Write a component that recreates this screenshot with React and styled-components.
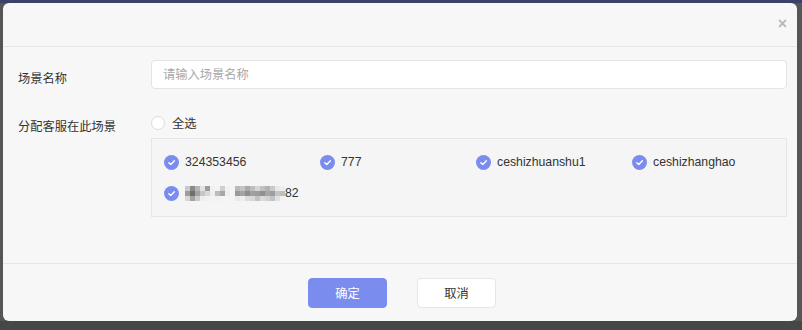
import React from 'react';
import styled, { createGlobalStyle } from 'styled-components';

const GlobalStyle = createGlobalStyle`
  body {
    margin: 0;
    background: #565656;
    font-family: "Liberation Sans", "Noto Sans CJK SC", sans-serif;
  }
`;

const agents = ['324353456', '777', 'ceshizhuanshu1', 'ceshizhanghao'];

// pixelated (masked) name, drawn as a mosaic
const mosaic = [
  ['#c9c9c9', '#8a8a8a', '#b5b5b5', '#e2e2e2', '#9c9c9c', '#f0f0f0', '#f3f3f3', '#cfcfcf', '#f2f2f2', '#f4f4f4', '#b9b9b9', '#c4c4c4', '#a9a9a9', '#bdbdbd', '#d6d6d6', '#c0c0c0', '#b2b2b2', '#cacaca', '#e9e9e9', '#eeeeee'],
  ['#9d9d9d', '#6f6f6f', '#a2a2a2', '#c6c6c6', '#d8d8d8', '#eeeeee', '#bcbcbc', '#a7a7a7', '#efefef', '#f4f4f4', '#9a9a9a', '#a4a4a4', '#8e8e8e', '#a0a0a0', '#9b9b9b', '#8f8f8f', '#a6a6a6', '#9e9e9e', '#c5c5c5', '#bebebe'],
  ['#d7d7d7', '#a3a3a3', '#cbcbcb', '#efefef', '#f2f2f2', '#f3f3f3', '#f1f1f1', '#f4f4f4', '#f4f4f4', '#f4f4f4', '#e9e9e9', '#eeeeee', '#dddddd', '#d8d8d8', '#c2c2c2', '#dadada', '#d2d2d2', '#c3c3c3', '#e1e1e1', '#f2f2f2'],
];

const Backdrop = styled.div`
  padding: 3px 5px 9px 3px;
  background: linear-gradient(#3c416b 0 3px, #565656 3px 321px, #474747 321px);
`;

const Modal = styled.div`
  width: 794px;
  height: 318px;
  background: #f7f7f7;
  border-radius: 6px;
  display: flex;
  flex-direction: column;
  color: #333;
  font-size: 12.25px;
`;

const Header = styled.div`
  height: 43px;
  border-bottom: 1px solid #e6e6e6;
  display: flex;
  align-items: center;
  justify-content: flex-end;
  padding-right: 10px;
`;

const Close = styled.span`
  color: #b8b8b8;
  font-size: 16px;
  font-weight: 700;
  line-height: 1;
  margin-top: -2px;
`;

const Body = styled.div`
  flex: 1;
  padding: 13px 10px 0 15px;
`;

const FormRow = styled.div`
  display: grid;
  grid-template-columns: 133px 636px;
  margin-bottom: ${p => p.$gap || 0}px;
`;

const Label = styled.div`
  line-height: ${p => p.$lh}px;
  padding-top: ${p => p.$top || 0}px;
`;

const Input = styled.input`
  box-sizing: border-box;
  height: 29px;
  width: 100%;
  border: 1px solid #e4e4e4;
  border-radius: 4px;
  background: #fff;
  padding: 0 11px;
  font: inherit;
  color: #333;
  outline: none;
  &::placeholder {
    color: #a8a8a8;
  }
`;

const SelectAll = styled.div`
  display: flex;
  align-items: center;
  gap: 7px;
  height: 20px;
  margin: 0 0 5px 0;
`;

const Radio = styled.span`
  box-sizing: border-box;
  width: 14px;
  height: 14px;
  border-radius: 50%;
  border: 1px solid #dcdcdc;
  background: #fff;
`;

const AgentBox = styled.div`
  box-sizing: border-box;
  height: 79px;
  border: 1px solid #e6e6e6;
  background: #f5f5f5;
  padding: 13px 0 0 12px;
  display: grid;
  grid-template-columns: repeat(4, 156px);
  grid-auto-rows: 20px;
  row-gap: 11px;
`;

const Agent = styled.div`
  display: flex;
  align-items: center;
  gap: 6px;
`;

const Check = styled.span`
  width: 15px;
  height: 15px;
  border-radius: 50%;
  background: #7b8cef;
  display: flex;
  align-items: center;
  justify-content: center;
`;

const Masked = styled.span`
  display: flex;
  align-items: center;
`;

const Footer = styled.div`
  border-top: 1px solid #e6e6e6;
  height: 57px;
  display: flex;
  align-items: center;
  justify-content: center;
  gap: 30px;
  padding-left: 4px;
`;

const Button = styled.button`
  box-sizing: border-box;
  width: 79px;
  height: 30px;
  border-radius: 4px;
  font: inherit;
  font-size: 12.25px;
  border: 1px solid ${p => (p.$primary ? '#7b8cef' : '#e6e6e6')};
  background: ${p => (p.$primary ? '#7b8cef' : '#fff')};
  color: ${p => (p.$primary ? '#fff' : '#333')};
  cursor: pointer;
`;

const CheckIcon = () => (
  <Check>
    <svg width="9" height="9" viewBox="0 0 10 10">
      <path d="M2 5.2 L4.2 7.3 L8.2 3" fill="none" stroke="#fff" strokeWidth="1.5" strokeLinecap="round" strokeLinejoin="round" />
    </svg>
  </Check>
);

const MaskedName = () => (
  <Masked>
    <svg width="100" height="15" viewBox="0 0 100 15">
      {mosaic.map((row, r) =>
        row.map((c, i) => <rect key={`${r}-${i}`} x={i * 5} y={r * 5} width="5" height="5" fill={c} />)
      )}
    </svg>
    <span>82</span>
  </Masked>
);

export default function App() {
  return (
    <>
      <GlobalStyle />
      <Backdrop>
        <Modal>
          <Header>
            <Close>×</Close>
          </Header>
          <Body>
            <FormRow $gap={15}>
              <Label $lh={38}>场景名称</Label>
              <Input placeholder="请输入场景名称" />
            </FormRow>
            <FormRow>
              <Label $lh={20} $top={4}>分配客服在此场景</Label>
              <div>
                <SelectAll>
                  <Radio />
                  <span>全选</span>
                </SelectAll>
                <AgentBox>
                  {agents.map(name => (
                    <Agent key={name}>
                      <CheckIcon />
                      <span>{name}</span>
                    </Agent>
                  ))}
                  <Agent>
                    <CheckIcon />
                    <MaskedName />
                  </Agent>
                </AgentBox>
              </div>
            </FormRow>
          </Body>
          <Footer>
            <Button $primary>确定</Button>
            <Button>取消</Button>
          </Footer>
        </Modal>
      </Backdrop>
    </>
  );
}
